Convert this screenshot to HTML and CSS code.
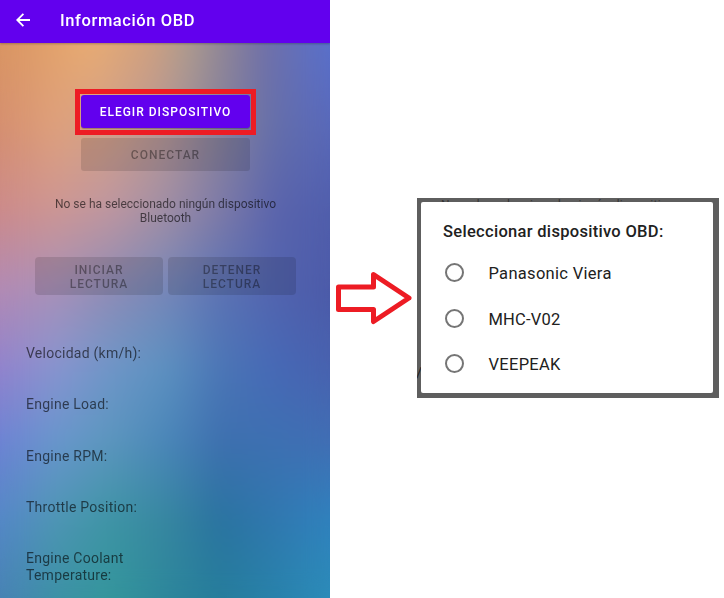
FILE: index.html
```html
<!DOCTYPE html>
<html lang="es">
<head>
<meta charset="utf-8">
<title>Información OBD</title>
<link rel="stylesheet" href="styles.css">
</head>
<body>
<main class="scene">
  <section class="phone">
    <div class="wallpaper">
      <i class="band b1"></i><i class="band b2"></i><i class="band b3"></i><i class="band b4"></i>
      <i class="band b5"></i><i class="band b6"></i><i class="band b7"></i><i class="band b8"></i>
      <i class="soften"></i>
    </div>
    <header class="appbar">
      <svg class="back" width="14" height="14" viewBox="0 0 14 14"><path d="M7.4 .8 1.2 7l6.2 6.2M1.2 7H14" fill="none" stroke="#fff" stroke-width="1.8"/></svg>
      <h1 class="title">Información OBD</h1>
    </header>
    <div class="content">
      <div class="highlight"><button class="btn primary">ELEGIR DISPOSITIVO</button></div>
      <button class="btn connect">CONECTAR</button>
      <p class="status">No se ha seleccionado ningún dispositivo<br>Bluetooth</p>
      <div class="actions">
        <button class="btn half">INICIAR<br>LECTURA</button>
        <button class="btn half">DETENER<br>LECTURA</button>
      </div>
      <ul class="readings">
        <li><span>Velocidad (km/h):</span></li>
        <li><span>Engine Load:</span></li>
        <li><span>Engine RPM:</span></li>
        <li><span>Throttle Position:</span></li>
        <li><span>Engine Coolant<br>Temperature:</span></li>
      </ul>
    </div>
  </section>
  <svg class="arrow" width="78" height="56" viewBox="0 0 78 56"><path d="M3.500 17H38.500V4.500L74 28 38.500 51.500V39.500H3.500Z" fill="#fff" stroke="#ed1c24" stroke-width="5" stroke-linejoin="round"/></svg>
  <section class="overlay">
    <div class="behind">No se ha seleccionado ningún dispositivo</div>
    <div class="behind-slash">/</div>
    <div class="dialog">
      <h2 class="dialog-title">Seleccionar dispositivo OBD:</h2>
      <div class="option"><i class="radio"></i><span>Panasonic Viera</span></div>
      <div class="option"><i class="radio"></i><span>MHC-V02</span></div>
      <div class="option"><i class="radio"></i><span>VEEPEAK</span></div>
    </div>
  </section>
</main>
</body>
</html>
```
FILE: styles.css
```css
* { box-sizing: border-box; }
body { margin: 0; background: #fff; font-family: Roboto, "Liberation Sans", sans-serif; }
h1, h2, p, ul { margin: 0; padding: 0; }
.scene { display: flex; width: 724px; height: 598px; overflow: hidden; }

.phone { position: relative; width: 330px; height: 598px; flex: none; overflow: hidden; }

/* Wallpaper: horizontal colour bands cross-faded from top to bottom */
.wallpaper { position: absolute; inset: 0; }
.band {
  position: absolute; inset: 0;
  -webkit-mask-image: linear-gradient(transparent var(--from), #000 var(--to));
  mask-image: linear-gradient(transparent var(--from), #000 var(--to));
}
.soften { position: absolute; inset: 0; backdrop-filter: blur(12px); }
.b1 { --from: -2px; --to: -1px; background: linear-gradient(90deg, rgb(217,148,98), rgb(233,172,115) 90px, rgb(208,160,128) 150px, rgb(172,155,143) 190px, rgb(150,138,148) 215px, rgb(112,112,168) 265px, rgb(88,112,205)); }
.b2 { --from: 43px; --to: 130px; background: linear-gradient(90deg, rgb(212,142,112), rgb(222,160,125), rgb(208,160,138), rgb(180,150,150), rgb(135,130,155), rgb(100,110,170), rgb(88,104,185)); }
.b3 { --from: 130px; --to: 210px; background: linear-gradient(90deg, rgb(204,138,138), rgb(205,150,148), rgb(190,150,160), rgb(160,142,165), rgb(125,122,168), rgb(90,100,172), rgb(80,94,172)); }
.b4 { --from: 210px; --to: 290px; background: linear-gradient(90deg, rgb(178,138,180), rgb(168,145,185), rgb(142,140,182), rgb(118,135,185), rgb(92,115,180), rgb(82,100,175), rgb(76,90,168)); }
.b5 { --from: 290px; --to: 370px; background: linear-gradient(90deg, rgb(145,130,205), rgb(135,148,208), rgb(110,150,200), rgb(92,145,192), rgb(75,118,182), rgb(70,105,182), rgb(72,98,175)); }
.b6 { --from: 370px; --to: 440px; background: linear-gradient(90deg, rgb(110,130,212), rgb(105,150,205), rgb(92,150,190), rgb(75,135,185), rgb(62,112,175), rgb(62,112,178), rgb(65,110,180)); }
.b7 { --from: 440px; --to: 520px; background: linear-gradient(90deg, rgb(85,135,200), rgb(78,150,180), rgb(62,148,165), rgb(55,135,160), rgb(42,115,160), rgb(48,120,175), rgb(48,130,190)); }
.b8 { --from: 520px; --to: 598px; background: linear-gradient(90deg, rgb(72,130,180), rgb(60,145,165), rgb(52,150,155), rgb(45,135,155), rgb(38,125,155), rgb(40,130,170), rgb(44,140,185)); }

.appbar {
  position: relative; display: flex; align-items: center; height: 43px;
  padding: 0 0 4px 16px; background: #6200ee; box-shadow: 0 1px 2px rgba(0,0,0,.25);
}
.title { margin: 2px 0 0 30px; color: #fff; font-size: 16.5px; font-weight: 500; line-height: 20px; letter-spacing: .6px; white-space: nowrap; }

.content { position: relative; display: flex; flex-direction: column; align-items: center; padding-top: 46px; }
.btn {
  display: block; border: 0; padding: 0 0 0 1px; border-radius: 3px; font-family: inherit;
  font-size: 12px; font-weight: 500; line-height: 14px; letter-spacing: 1px; text-align: center;
  color: rgba(0,0,0,.38); background: rgba(0,0,0,.12);
}
.highlight { width: 181px; height: 46px; border: 5px solid #ed1c24; padding: 1px; }
.primary { width: 169px; height: 33px; padding-top: 1px; background: #6200ee; color: #fff; box-shadow: 0 1px 1px rgba(0,0,0,.25); }
.connect { width: 169px; height: 33px; margin-top: 3px; }
.status { margin-top: 26px; padding-left: 1px; font-size: 12px; line-height: 14px; color: rgba(0,0,0,.6); text-align: center; white-space: nowrap; }
.actions { display: flex; gap: 5px; margin-top: 32px; }
.half { width: 128px; height: 38px; padding-top: 1px; border-radius: 4px; }
.readings { align-self: stretch; list-style: none; padding: 50px 0 0 26px; }
.readings li { height: 51.300px; font-size: 14px; line-height: 17px; letter-spacing: .25px; color: rgba(0,0,0,.6); }

.arrow { flex: none; margin: 270px 0 0 5px; }

.overlay { position: relative; flex: none; width: 302px; height: 200px; margin: 198px 0 0 4px; padding: 4px 6px 5px 4px; background: #5e5e5e; overflow: hidden; }
.behind { position: absolute; left: 24px; top: 0; font-size: 12px; line-height: 14px; letter-spacing: .3px; white-space: nowrap; color: #333; }
.behind-slash { position: absolute; left: -1px; top: 166px; font-size: 15px; color: #222; }
.dialog { position: relative; height: 191px; padding: 20px 0 0 22px; background: #fff; border-radius: 2px; color: #212121; }
.dialog-title { margin-bottom: 8px; font-size: 16.500px; font-weight: 500; line-height: 20px; letter-spacing: .3px; white-space: nowrap; }
.option { display: flex; align-items: center; height: 45.500px; padding-left: 2px; font-size: 16.500px; letter-spacing: .3px; }
.option span { padding-top: 2px; }
.option:nth-of-type(2) span { letter-spacing: .2px; }
.radio { width: 19px; height: 19px; margin-right: 24.500px; border: 2px solid #757575; border-radius: 50%; }
```
